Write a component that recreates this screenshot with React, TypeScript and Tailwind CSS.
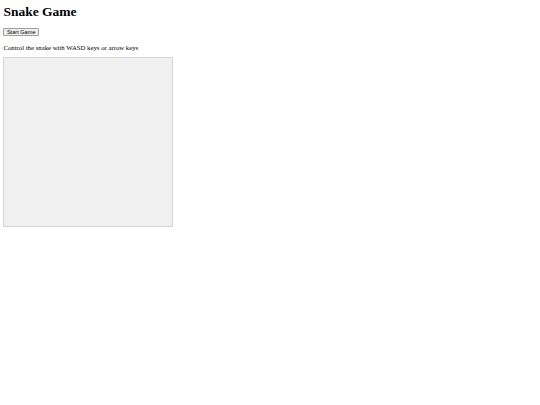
export default function App() {
  return (
    <div className="min-h-[405px] bg-white pl-[3.4px] pt-[4px]" style={{ fontFamily: '"Liberation Serif", serif' }}>
      <h1 className="m-0 text-[13.5px] leading-[15px] font-bold text-black font-['Liberation_Serif',serif]">Snake Game</h1>
      <div className="mt-[9px] flex">
        <button className="h-[8px] box-border border border-[#a0a0a0] bg-[#efefef] rounded-[1px] px-[2.5px] text-[5.6px] leading-[6px] text-black font-['Liberation_Sans',sans-serif] flex items-center">
          Start Game
        </button>
      </div>
      <p className="mt-[7.5px] m-0 text-[6.75px] leading-[7.75px] text-black font-['Liberation_Serif',serif]">
        Control the snake with WASD keys or arrow keys
      </p>
      <div className="mt-[5.75px] w-[170px] h-[170px] box-border border border-[#d6d6d6] bg-[#f0f0f0]" />
    </div>
  );
}
